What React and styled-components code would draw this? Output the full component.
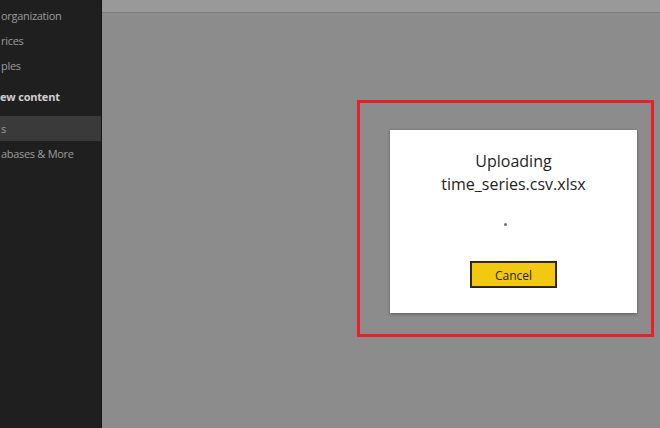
import React from "react";
import styled, { createGlobalStyle } from "styled-components";

const GlobalStyle = createGlobalStyle`
  html, body {
    margin: 0;
    padding: 0;
    width: 660px;
    height: 428px;
    overflow: hidden;
  }
  #root {
    width: 660px;
    height: 428px;
  }
  * {
    box-sizing: border-box;
  }
`;

const navItems = [
  { label: "organization" },
  { label: "rices" },
  { label: "ples" },
  { label: "ew content", heading: true },
  { label: "s", active: true },
  { label: "abases & More" },
];

const App = () => {
  return (
    <>
      <GlobalStyle />
      <Page>
        <Sidebar>
          {navItems.map((item) =>
            item.heading ? (
              <Heading key={item.label}>{item.label}</Heading>
            ) : (
              <NavItem key={item.label} $active={item.active}>
                {item.label}
              </NavItem>
            )
          )}
        </Sidebar>
        <Main>
          <TopBar />
          <Content>
            <Highlight>
              <Dialog>
                <Title>
                  Uploading
                  <br />
                  time_series.csv.xlsx
                </Title>
                <Spinner />
                <CancelButton>Cancel</CancelButton>
              </Dialog>
            </Highlight>
          </Content>
        </Main>
      </Page>
    </>
  );
};

const Page = styled.div`
  display: flex;
  width: 660px;
  height: 428px;
  font-family: "Segoe UI", "Open Sans", "Noto Sans", sans-serif;
`;

const Sidebar = styled.div`
  width: 102px;
  flex-shrink: 0;
  background-color: #1f1f1f;
  border-right: 1px solid #141414;
  padding-top: 3px;
  display: flex;
  flex-direction: column;
  overflow: hidden;
`;

const NavItem = styled.div`
  height: 25px;
  line-height: 25px;
  padding-left: 1px;
  font-size: 11px;
  letter-spacing: -0.3px;
  color: #9c9c9c;
  white-space: nowrap;
  background-color: ${(p) => (p.$active ? "#3a3a3a" : "transparent")};
`;

const Heading = styled.div`
  height: 38px;
  line-height: 38px;
  font-size: 11px;
  font-weight: 700;
  letter-spacing: -0.2px;
  color: #cfcfcf;
  white-space: nowrap;
`;

const Main = styled.div`
  flex: 1;
  display: flex;
  flex-direction: column;
  background-color: #8c8c8c;
`;

const TopBar = styled.div`
  height: 13px;
  background-color: #999999;
  border-bottom: 1px solid #7d7d7d;
`;

const Content = styled.div`
  flex: 1;
  display: flex;
  justify-content: flex-end;
  align-items: flex-start;
  padding: 87px 6px 0 0;
`;

const Highlight = styled.div`
  width: 297px;
  height: 237px;
  border: 3px solid #e8202a;
  padding: 27px 14px 21px 30px;
`;

const Dialog = styled.div`
  width: 247px;
  height: 183px;
  background-color: #ffffff;
  box-shadow: 0 1px 3px rgba(0, 0, 0, 0.35);
  display: flex;
  flex-direction: column;
  align-items: center;
  padding-top: 20px;
`;

const Title = styled.div`
  font-size: 16px;
  line-height: 23px;
  color: #252423;
  text-align: center;
`;

const Spinner = styled.div`
  width: 3px;
  height: 3px;
  border-radius: 50%;
  background-color: #6f6f6f;
  margin: 27px 0 0 -17px;
`;

const CancelButton = styled.button`
  margin-top: 35px;
  width: 87px;
  height: 27px;
  background-color: #f2c811;
  border: 1px solid #252423;
  box-shadow: inset 0 0 0 1px #3a3000;
  font-family: inherit;
  font-size: 12px;
  line-height: 25px;
  padding: 1px 0 0;
  color: #252423;
  cursor: pointer;
`;

export default App;
